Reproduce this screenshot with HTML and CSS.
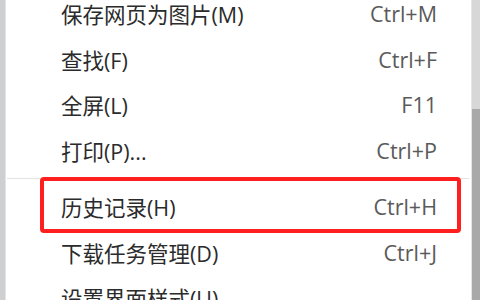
FILE: index.html
```html
<!DOCTYPE html>
<html lang="zh-CN">
<head>
<meta charset="utf-8">
<link rel="stylesheet" href="styles.css">
</head>
<body>
<div class="frame">
  <div class="edge"></div>
  <div class="menu">
    <div class="list">
      <div class="item"><span class="label">保存网页为图片(M)</span><span class="key">Ctrl+M</span></div>
      <div class="item"><span class="label">查找(F)</span><span class="key">Ctrl+F</span></div>
      <div class="item"><span class="label">全屏(L)</span><span class="key">F11</span></div>
      <div class="item"><span class="label">打印(P)...</span><span class="key">Ctrl+P</span></div>
      <div class="sep"></div>
      <div class="item"><span class="label">历史记录(H)</span><span class="key">Ctrl+H</span></div>
      <div class="item"><span class="label">下载任务管理(D)</span><span class="key">Ctrl+J</span></div>
      <div class="item"><span class="label">设置界面样式(U)</span><span class="key"></span></div>
    </div>
    <div class="highlight"></div>
  </div>
  <div class="scrollbar">
    <div class="track"></div>
    <div class="thumb"></div>
  </div>
</div>
</body>
</html>
```
FILE: styles.css
```css
html, body {
  margin: 0;
  padding: 0;
  background: #ffffff;
}
.frame {
  display: flex;
  width: 480px;
  height: 300px;
  overflow: hidden;
}
.edge {
  width: 5px;
  flex: none;
  background: #cdcfd1;
  border-right: 1px solid #e4e5e6;
}
.menu {
  flex: 1;
  position: relative;
  overflow: hidden;
  background: #fff;
}
.list {
  margin-top: -9px;
}
.item {
  height: 45.5px;
  display: flex;
  align-items: center;
  justify-content: space-between;
  padding: 0 34px 0 55px;
  font-family: "Open Sans", "Noto Sans CJK SC", sans-serif;
  font-size: 21.5px;
}
.label {
  color: #2b2b2b;
}
.key {
  color: #5a5a5a;
}
.sep {
  height: 11px;
  display: flex;
  align-items: center;
  padding: 0 2px 0 1px;
}
.sep::before {
  content: "";
  flex: 1;
  height: 1px;
  background: #e3e3e3;
}
.highlight {
  position: absolute;
  left: 34px;
  top: 177px;
  width: 413px;
  height: 48px;
  border: 4px solid #ff1f1f;
  border-radius: 4px;
}
.scrollbar {
  width: 8px;
  flex: none;
  display: flex;
  flex-direction: column;
  border-left: 1px solid #e6e6e6;
}
.track {
  height: 109px;
  background: #d7d7d7;
}
.thumb {
  flex: 1;
  background: #a9a9a9;
}
```
